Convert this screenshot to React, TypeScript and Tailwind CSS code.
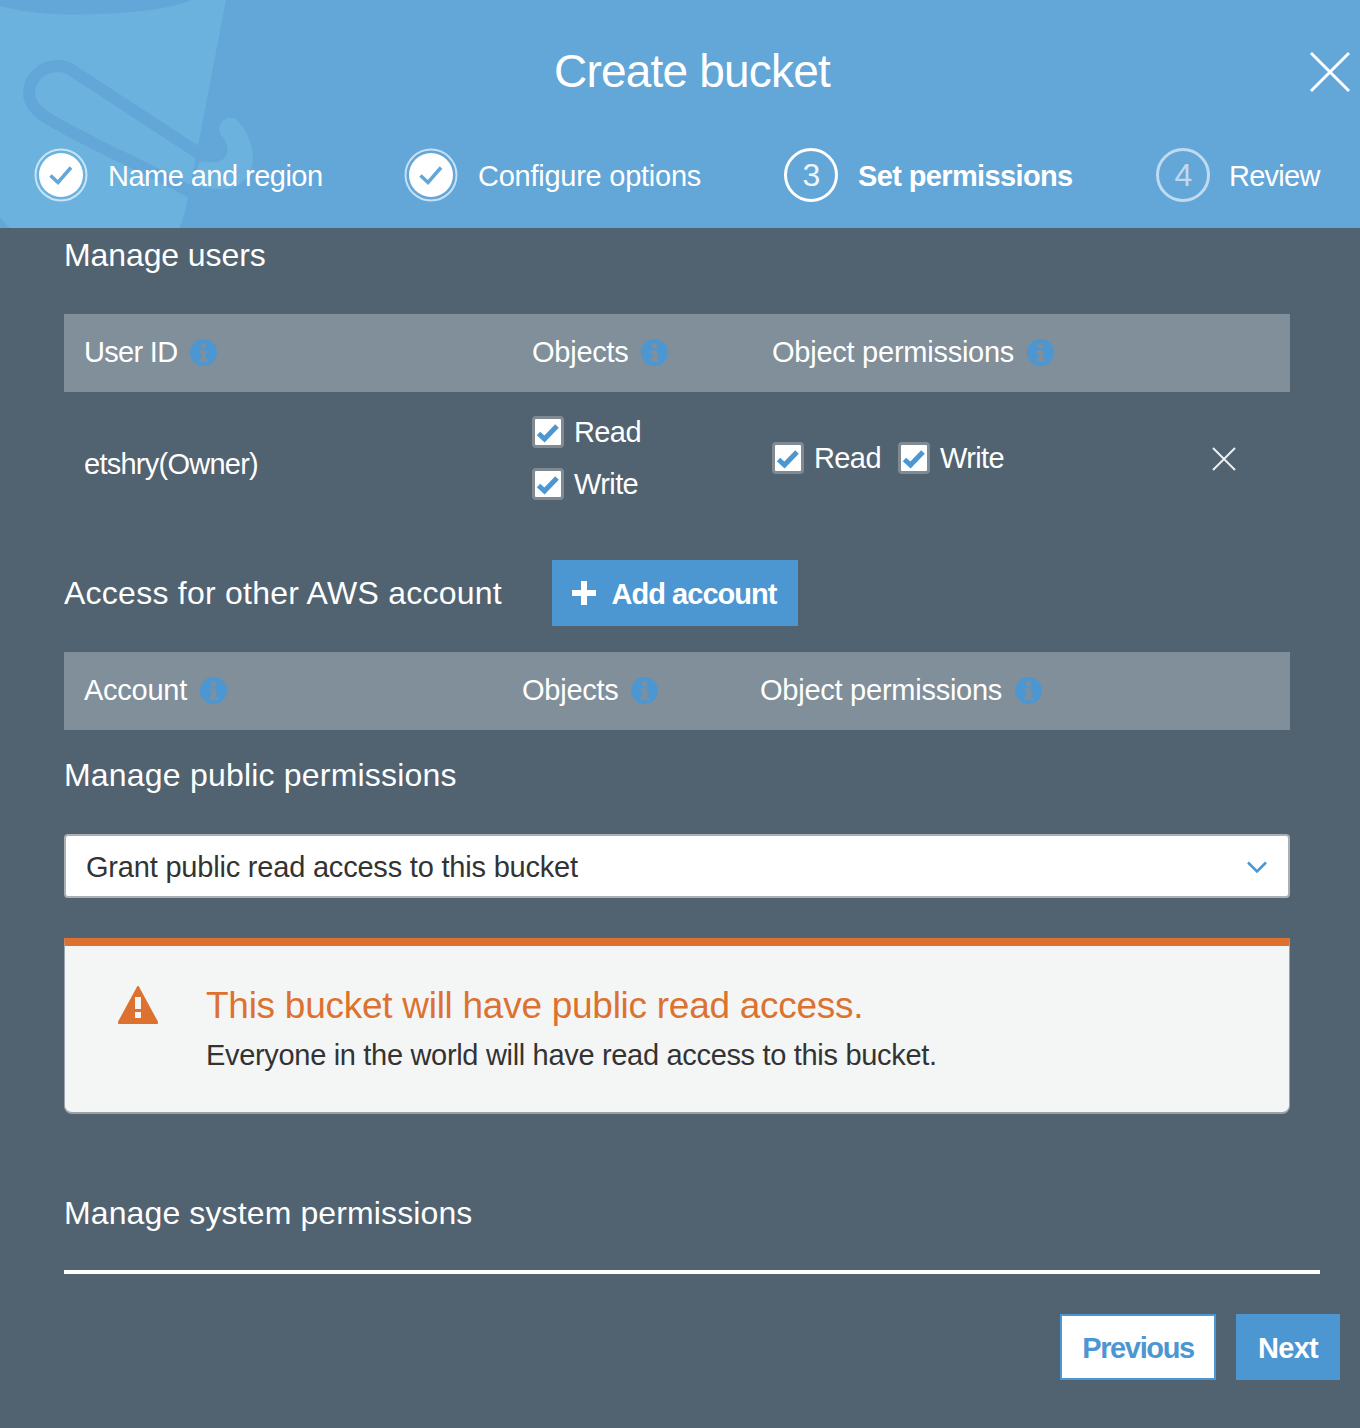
const font = "[font-family:'Liberation_Sans',Arial,sans-serif]";

const CheckedStep = () => (
  <svg width="54" height="54" viewBox="0 0 54 54" className="shrink-0">
    <circle cx="27" cy="27" r="25.5" fill="none" stroke="#ffffff" strokeOpacity="0.65" strokeWidth="2" />
    <circle cx="27" cy="27" r="22" fill="#ffffff" />
    <path d="M16.5 27.5l7.5 7 13-15" fill="none" stroke="#63a6d8" strokeWidth="3.5" />
  </svg>
);

const NumberStep = ({ n, dim }: { n: string; dim?: boolean }) => (
  <div
    className={`w-[54px] h-[54px] shrink-0 rounded-full border-[3px] flex items-center justify-center text-[32px] ${
      dim ? "border-white/60 text-white/60" : "border-white text-white/90"
    }`}
  >
    {n}
  </div>
);

const Info = () => (
  <svg width="27" height="27" viewBox="0 0 27 27" className="shrink-0 mb-[2px]">
    <circle cx="13.5" cy="13.5" r="13.5" fill="#4c96d2" />
    <circle cx="13.5" cy="6.8" r="2.8" fill="#808f9a" />
    <path d="M9.5 11.5h6.5v8.5h2v3h-8.500v-3h2v-5.500h-2z" fill="#808f9a" />
  </svg>
);

const Checkbox = () => (
  <div className="w-8 h-8 shrink-0 bg-white border-[3px] border-[#7f8a93] rounded-[4px] flex items-center justify-center">
    <svg width="24" height="24" viewBox="0 0 24 24">
      <path d="M2.500 13.500l6 5.500L21 6" fill="none" stroke="#4c96d2" strokeWidth="5" />
    </svg>
  </div>
);

const CheckLabel = ({ label }: { label: string }) => (
  <div className="flex items-center gap-[10px] h-8">
    <Checkbox />
    <span className="pt-[2px]">{label}</span>
  </div>
);

const HeadCell = ({
  label,
  className,
  gap,
  tracking = "tracking-[-0.25px]",
}: {
  label: string;
  className: string;
  gap: string;
  tracking?: string;
}) => (
  <div className={`flex items-center ${gap} ${className}`}>
    <span className={tracking}>{label}</span>
    <Info />
  </div>
);

const App = () => {
  return (
    <div className={`w-[1360px] h-[1428px] bg-[#516270] text-white text-[29px] tracking-[-0.6px] overflow-hidden ${font}`}>
      {/* Header */}
      <div className="relative h-[228px] bg-[#63a6d8] overflow-hidden">
        <svg width="300" height="228" viewBox="0 0 300 228" className="absolute left-0 top-0">
          <path d="M0 0H226L188 198C186 210 183 220 179 228H10L0 218Z" fill="#6bb2de" />
          <path d="M0 0H192C170 10 120 14.500 70 14.500C40 14.500 15 10 0 6Z" fill="#63a6d8" />
          <path
            d="M200 160C208 163 217 163 222 160C230 155 229 145 220 133C216 124 226 116 233 118C240 119 253 140 253 157C253 178 240 188 222 189C212 189 200 187 192 185Z"
            fill="#6bb2de"
          />
          <path
            d="M192 193C150 168 90 145 44 116C30 106 29 98 29 93C29 78 42 66 58 66C66 66 71 69 76 73L206 158"
            fill="none"
            stroke="#63a6d8"
            strokeWidth="12"
          />
        </svg>
        <div className="relative h-full flex flex-col">
          <div className="relative h-[142px] flex justify-center pl-[24px] pt-[44px]">
            <h1 className="text-[46px] leading-[54px] font-normal tracking-[-0.8px]">Create bucket</h1>
            <svg width="42" height="42" viewBox="0 0 42 42" className="absolute right-[9px] top-[51px]">
              <path d="M2 2l38 38M40 2L2 40" stroke="#ffffff" strokeWidth="3" />
            </svg>
          </div>
          <div className="flex items-center pl-[34px] h-[66px]">
            <div className="flex items-center gap-[20px] w-[370px]">
              <CheckedStep />
              <span className="pt-[4px] tracking-[-0.53px]">Name and region</span>
            </div>
            <div className="flex items-center gap-[20px] w-[380px]">
              <CheckedStep />
              <span className="pt-[4px] tracking-[-0.25px]">Configure options</span>
            </div>
            <div className="flex items-center gap-[20px] w-[372px]">
              <NumberStep n="3" />
              <span className="pt-[4px] font-bold tracking-[-0.63px]">Set permissions</span>
            </div>
            <div className="flex items-center gap-[19px]">
              <NumberStep n="4" dim />
              <span className="pt-[4px] tracking-[-0.75px]">Review</span>
            </div>
          </div>
        </div>
      </div>

      {/* Body */}
      <div className="pl-[64px] pr-[70px]">
        <h2 className="text-[32px] leading-[54px] font-normal h-[86px] tracking-[-0.1px]">Manage users</h2>

        <div className="h-[78px] bg-[#808f9a] flex items-center pl-[20px]">
          <HeadCell label="User ID" className="w-[448px]" gap="gap-[13px]" tracking="tracking-[-0.7px]" />
          <HeadCell label="Objects" className="w-[240px]" gap="gap-[12px]" />
          <HeadCell label="Object permissions" className="" gap="gap-[13px]" />
        </div>

        <div className="h-[168px] flex pl-[20px]">
          <div className="w-[448px] pt-[56px] leading-[32px] tracking-[-0.75px]">etshry(Owner)</div>
          <div className="w-[240px] pt-[24px] flex flex-col gap-5">
            <CheckLabel label="Read" />
            <CheckLabel label="Write" />
          </div>
          <div className="flex-1 pt-[50px] flex gap-[17px] h-fit">
            <CheckLabel label="Read" />
            <CheckLabel label="Write" />
          </div>
          <div className="pt-[55px] pr-[54px]">
            <svg width="24" height="24" viewBox="0 0 24 24">
              <path d="M1 1l22 22M23 1L1 23" stroke="#ffffff" strokeOpacity="0.9" strokeWidth="2" />
            </svg>
          </div>
        </div>

        <div className="flex items-center h-[66px]">
          <h2 className="text-[32px] font-normal w-[488px] tracking-[0.25px]">Access for other AWS account</h2>
          <button className="h-[66px] w-[246px] pr-[2px] bg-[#4c96d2] font-bold flex items-center justify-center gap-[14px]">
            <svg width="26" height="26" viewBox="0 0 26 26">
              <path d="M13 1v24M1 13h24" stroke="#ffffff" strokeWidth="6" />
            </svg>
            <span className="pt-[4px] tracking-[-0.95px]">Add account</span>
          </button>
        </div>

        <div className="mt-[26px] h-[78px] bg-[#808f9a] flex items-center pl-[20px]">
          <HeadCell label="Account" className="w-[438px]" gap="gap-[13px]" />
          <HeadCell label="Objects" className="w-[238px]" gap="gap-[12px]" />
          <HeadCell label="Object permissions" className="" gap="gap-[13px]" />
        </div>

        <h2 className="text-[32px] leading-[90px] h-[104px] font-normal tracking-[0.2px]">Manage public permissions</h2>

        <div className="h-16 bg-white border-2 border-[#a9b1b7] rounded-[4px] flex items-center justify-between pl-[20px] pr-[20px] text-[#333] tracking-[-0.2px]">
          <span className="pt-[3px]">Grant public read access to this bucket</span>
          <svg width="22" height="14" viewBox="0 0 22 14" className="mt-[2px]">
            <path d="M2 2.500l9 9 9-9" fill="none" stroke="#4c96d2" strokeWidth="2.500" />
          </svg>
        </div>

        <div className="mt-[40px] h-[176px] bg-[#f4f6f6] border-t-8 border-x border-b-2 border-x-[#9aa3a9] border-b-[#9aa3a9] border-t-[#dd7230] rounded-b-[8px] flex pl-[53px] pt-[40px]">
          <svg width="40" height="38" viewBox="0 0 40 38" className="shrink-0">
            <path d="M20 1L39 36a1 1 0 0 1-1 1.500H2A1 1 0 0 1 1 36Z" fill="#dd7230" stroke="#dd7230" strokeLinejoin="round" strokeWidth="2" />
            <path d="M17 11h6v12h-6zM17 26h6v6h-6z" fill="#f4f6f6" />
          </svg>
          <div className="ml-[48px]">
            <div className="text-[#dd7230] text-[37px] leading-[40px] tracking-[-0.27px]">This bucket will have public read access.</div>
            <div className="text-[#333] leading-[34px] mt-[12px] tracking-[-0.32px]">Everyone in the world will have read access to this bucket.</div>
          </div>
        </div>

        <h2 className="text-[32px] leading-[40px] font-normal mt-[79px] tracking-[0.12px]">Manage system permissions</h2>
      </div>

      <div className="ml-[64px] mr-[40px] mt-[37px] border-t-4 border-white" />

      <div className="mt-[40px] pr-[20px] flex justify-end gap-[20px] font-bold">
        <button className="w-[156px] h-[66px] pt-[4px] bg-white border-2 border-[#4c96d2] text-[#4c96d2] tracking-[-1.35px]">Previous</button>
        <button className="w-[104px] h-[66px] pt-[4px] bg-[#4c96d2] tracking-[-0.75px]">Next</button>
      </div>
    </div>
  );
};

export default App;
